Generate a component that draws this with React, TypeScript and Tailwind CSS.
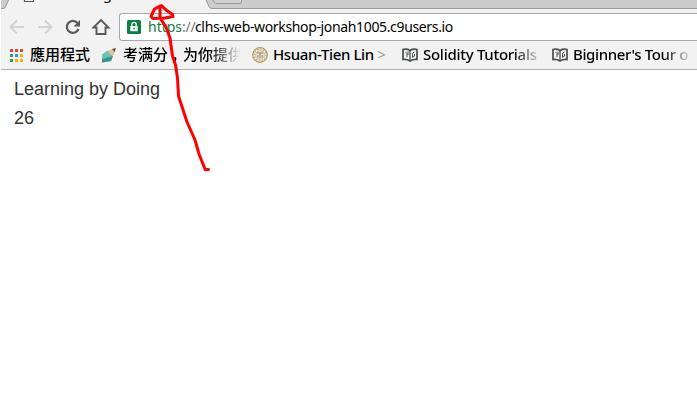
import React from "react";

const uiFont = "font-['Noto_Sans','Noto_Sans_CJK_SC',sans-serif]";

function TabStrip() {
  return (
    <div className="h-[9px] shrink-0 overflow-hidden">
      <svg width="696" height="9" viewBox="1 0 696 9" className="block">
        <rect x="0" y="0" width="697" height="9" fill="#cccccc" />
        <path d="M5 9L9.200 0H205.500L209 7L210.500 9Z" fill="#f2f2f2" />
        <path d="M0 8.500H3Q4.500 8.500 5.200 7L8.500 0M206 0L209 6.500Q210 8.500 212 8.500H697" fill="none" stroke="#999" />
        <path d="M24.500 0V1.500H33.500V0" fill="none" stroke="#5a5a5a" strokeWidth="1.200" />
        <path d="M213 0L214.500 2.500Q215 3.500 216.500 3.500H240Q241.500 3.500 241.500 2V0" fill="#d0d0d0" stroke="#999" />
        <text x="45" y="-1.500" fontSize="15" textLength="67" fill="#111" fontFamily="Noto Sans, sans-serif">Learning</text>
      </svg>
    </div>
  );
}

function Toolbar() {
  return (
    <div className="flex h-8 shrink-0 items-center pt-[4px] pb-0">
      <svg width="118" height="28" viewBox="1 13 118 28" fill="none" className="shrink-0">
        <g stroke="#d2d2d2" strokeWidth="2">
          <path d="M24 27H11M17 20.500L10.500 27L17 33.500" />
          <path d="M38 27H51M45 20.500L51.500 27L45 33.500" />
        </g>
        <path d="M77.500 23A6 6 0 1 0 78.500 29" stroke="#5a5a5a" strokeWidth="2.200" />
        <path d="M80 20V26.500H73.500Z" fill="#5a5a5a" />
        <path d="M93.500 27.500L101 20L108.500 27.500H105.500V34H96.500V27.500Z" stroke="#5a5a5a" strokeWidth="1.900" />
      </svg>
      <div className="flex h-7 grow items-center rounded-l-[3px] border border-r-0 border-[#a8a8a8] bg-white pl-[7px]">
        <svg width="14" height="14" viewBox="0 0 14 14" className="shrink-0">
          <rect width="14" height="14" rx="1.500" fill="#0b8043" />
          <rect x="3.300" y="6" width="7.400" height="5.200" fill="#fff" />
          <path d="M4.800 6V4.500a2.200 2.200 0 0 1 4.400 0V6" fill="none" stroke="#fff" strokeWidth="1.300" />
          <rect x="6.300" y="7.800" width="1.400" height="1.600" fill="#0b8043" />
        </svg>
        <div className={`flex pl-[7px] text-[14px] leading-[20px] whitespace-pre text-black ${uiFont}`}>
          <span className="w-[34px] text-[#0b8043]">https</span>
          <span className="w-[13px] tracking-[-0.200px] text-[#777]">://</span>
          <span className="tracking-[-0.350px]">clhs-web-workshop-jonah1005.c9users.io</span>
        </div>
      </div>
    </div>
  );
}

function AppsIcon() {
  const colors = ["#ea4335", "#ea4335", "#ea4335", "#34a060", "#2196f3", "#fbb000", "#34a060", "#fbb000", "#fbb000"];
  return (
    <svg width="13" height="13" viewBox="0 0 13 13">
      {colors.map((c, i) => (
        <rect key={i} x={(i % 3) * 5} y={Math.floor(i / 3) * 5} width="3" height="3" fill={c} />
      ))}
    </svg>
  );
}

function PencilIcon() {
  return (
    <svg width="16" height="16" viewBox="0 0 16 16">
      <path d="M1 7.500L6.500 3.500L12 9L10 14L1 15.500Z" fill="#6cc5b2" />
      <path d="M1 15.500V12L12 9L10 14Z" fill="#3b9486" />
      <path d="M6.500 3.500L12 2L14.500 4L12 9L9 7Z" fill="#dfc39a" />
      <path d="M11 2L15 1L13.500 5Z" fill="#55504a" />
    </svg>
  );
}

function SealIcon() {
  return (
    <svg width="16" height="16" viewBox="0 0 16 16" fill="none">
      <circle cx="8" cy="8" r="7.300" fill="#eee6d4" stroke="#b2976a" strokeWidth="1.200" />
      <circle cx="8" cy="8" r="5.900" stroke="#c4ac80" strokeWidth="1.200" strokeDasharray="1.500 1.500" />
      <circle cx="8" cy="8" r="4.200" fill="#f4efe2" stroke="#b9a173" strokeWidth="0.700" />
      <path d="M5 6H11M8 6V11M6 8V10.500M10 8V10.500" stroke="#857262" strokeWidth="1" />
    </svg>
  );
}

function BookIcon() {
  return (
    <svg width="16" height="16" viewBox="0 0 16 16" fill="none" stroke="#4c4f50">
      <path d="M1 2.500Q5 1.500 8 3.500Q11 1.500 15 2.500V12.500Q11 12 8 14Q5 12 1 12.500Z" strokeWidth="1.700" />
      <path d="M8 3.500V13.500" strokeWidth="1.300" />
      <path d="M3.500 5L5 6.500V10M6 4.500V8M10.500 10.500V7Q10.500 5.500 12.500 5M12.500 7V9L10.500 10" strokeWidth="1" />
    </svg>
  );
}

function Bookmark({ icon, label, className, textClass }: {
  icon: React.ReactNode;
  label: React.ReactNode;
  className: string;
  textClass: string;
}) {
  return (
    <div className={`flex shrink-0 items-center ${className}`}>
      <div className="shrink-0">{icon}</div>
      <span className={`overflow-hidden pb-[2px] whitespace-pre ${textClass}`}>{label}</span>
    </div>
  );
}

function BookmarksBar() {
  return (
    <div className={`flex h-7 shrink-0 items-center text-[15px] leading-[22px] font-medium text-black ${uiFont}`}>
      <Bookmark icon={<AppsIcon />} label="應用程式" className="w-[91px] pl-[9px]" textClass="ml-[7px]" />
      <Bookmark
        icon={<PencilIcon />}
        label={<>考满分<span className="mr-[-3px] pl-[3px]">，</span>为你提供</>}
        className="w-[151px] pl-[9px]"
        textClass="ml-[6px] w-[121px] [mask-image:linear-gradient(to_right,black_72%,transparent_98%)]"
      />
      <Bookmark
        icon={<SealIcon />}
        label={<>Hsuan-Tien Lin<span className="font-normal text-[#999]"> &gt;</span></>}
        className="w-[150px] pl-[9px]"
        textClass="ml-[5px] tracking-[-0.370px]"
      />
      <Bookmark icon={<BookIcon />} label="Solidity Tutorials" className="w-[150px] pl-[9px]" textClass="ml-[5px] w-[120px] tracking-[-0.280px] [mask-image:linear-gradient(to_right,black_75%,transparent)]" />
      <Bookmark icon={<BookIcon />} label="Biginner's Tour o" className="w-[154px] pl-[9px]" textClass="ml-[5px] w-[120px] tracking-[-0.370px] [mask-image:linear-gradient(to_right,black_75%,transparent)]" />
    </div>
  );
}

export default function App() {
  return (
    <div className="relative flex h-[412px] w-[697px] flex-col overflow-hidden bg-white pl-px">
      <div className="flex h-[70px] shrink-0 flex-col border-b border-[#b0b0b0] bg-[#f2f2f2]">
        <TabStrip />
        <Toolbar />
        <BookmarksBar />
      </div>
      <main className="pt-[5px] pl-[13px] font-['Liberation_Sans',sans-serif] text-[18px] leading-[29px] text-[#333]">
        <p>Learning by Doing</p>
        <p>26</p>
      </main>
      <svg className="pointer-events-none absolute inset-0" width="697" height="412" fill="none" stroke="#ff0000" strokeWidth="3" strokeLinecap="round" strokeLinejoin="round">
        <path d="M205 169L199 154L195 140L187 122L178.500 96L177.500 78L175.500 65L172.500 56L170 38L166 27L161 19.500L160 18V6L154.500 9L151 16.500L153 18.500L165 18L173 16.500L172.500 14.500L166 10L161.500 5.500M205 169.500H208.500" />
      </svg>
    </div>
  );
}
